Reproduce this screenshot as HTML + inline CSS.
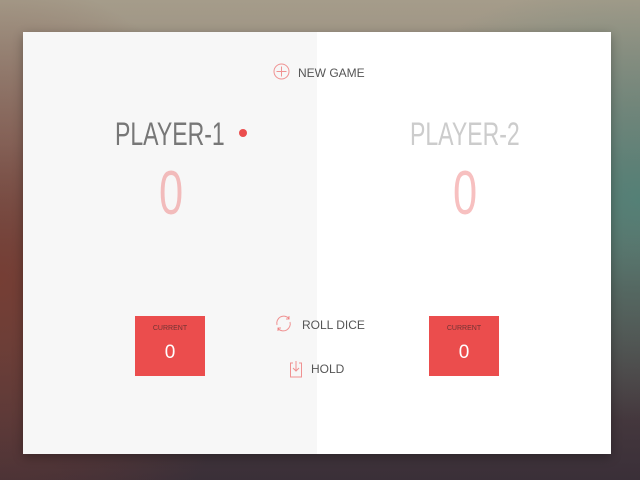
<!DOCTYPE html>
<html><head><style>
html,body{margin:0;padding:0;width:640px;height:480px;overflow:hidden;font-family:"Liberation Sans",sans-serif}
body{background:
radial-gradient(ellipse 300px 220px at 640px 200px,rgba(80,130,120,.9),transparent),
radial-gradient(ellipse 260px 300px at 0px 280px,rgba(120,60,50,.9),transparent),
linear-gradient(180deg,#a59c8a 0%,#8f8378 30%,#5a4a48 60%,#3a2f38 100%);}
.panel{position:absolute;left:23px;top:32px;width:588px;height:422px;background:#fff;box-shadow:0 3px 10px rgba(0,0,0,.3)}
.left{position:absolute;left:0;top:0;width:294px;height:422px;background:#f7f7f7}
.t{position:absolute;white-space:nowrap}
.name{font-size:32px;color:#777;top:84px;transform:scaleX(0.72);transform-origin:0 0}
.score{font-size:62px;color:#eb4d4d;opacity:.35;top:126px;transform:scaleX(0.7);transform-origin:0 0}
.cur{position:absolute;top:284px;width:70px;height:60px;background:#eb4d4d}
.cur .l{position:absolute;top:9px;width:100%;text-align:center;font-size:7px;color:#222;opacity:.6}
.cur .v{position:absolute;top:26px;width:100%;text-align:center;font-size:19px;color:#fff}
.btn{font-size:12px;color:#555}
</style></head><body>
<div class="panel">
<div class="left"></div>
<svg class="t" style="left:250px;top:31px" width="17" height="17" viewBox="0 0 17 17"><circle cx="8.5" cy="8.5" r="7.5" fill="none" stroke="#eb4d4d" stroke-opacity=".6"/><path d="M8.5 3.5v10M3.5 8.5h10" stroke="#eb4d4d" stroke-opacity=".6"/></svg>
<div class="t btn" style="left:275px;top:34px">NEW GAME</div>
<div class="t name" style="left:92px">PLAYER-1</div>
<div class="t" style="left:216px;top:97px;width:8px;height:8px;border-radius:50%;background:#eb4d4d"></div>
<div class="t name" style="left:387px;color:#ccc">PLAYER-2</div>
<div class="t score" style="left:136px">0</div>
<div class="t score" style="left:430px">0</div>
<div class="cur" style="left:112px"><div class="l">CURRENT</div><div class="v">0</div></div>
<div class="cur" style="left:406px"><div class="l">CURRENT</div><div class="v">0</div></div>
<svg class="t" style="left:251px;top:282px" width="19" height="19" viewBox="0 0 19 19"><path d="M3 11A7 7 0 0 1 15 4.5M16 8A7 7 0 0 1 4 14.5" fill="none" stroke="#eb4d4d" stroke-opacity=".6"/><path d="M15 2v3h-3M4 17v-3h3" fill="none" stroke="#eb4d4d" stroke-opacity=".6"/></svg>
<div class="t btn" style="left:279px;top:286px">ROLL DICE</div>
<svg class="t" style="left:266px;top:328px" width="14" height="18" viewBox="0 0 14 18"><path d="M4 3H1.5v14h11V3H10" fill="none" stroke="#eb4d4d" stroke-opacity=".6"/><path d="M7 1v10M4 8l3 3 3-3" fill="none" stroke="#eb4d4d" stroke-opacity=".6"/></svg>
<div class="t btn" style="left:288px;top:330px">HOLD</div>
</div>
</body></html>
